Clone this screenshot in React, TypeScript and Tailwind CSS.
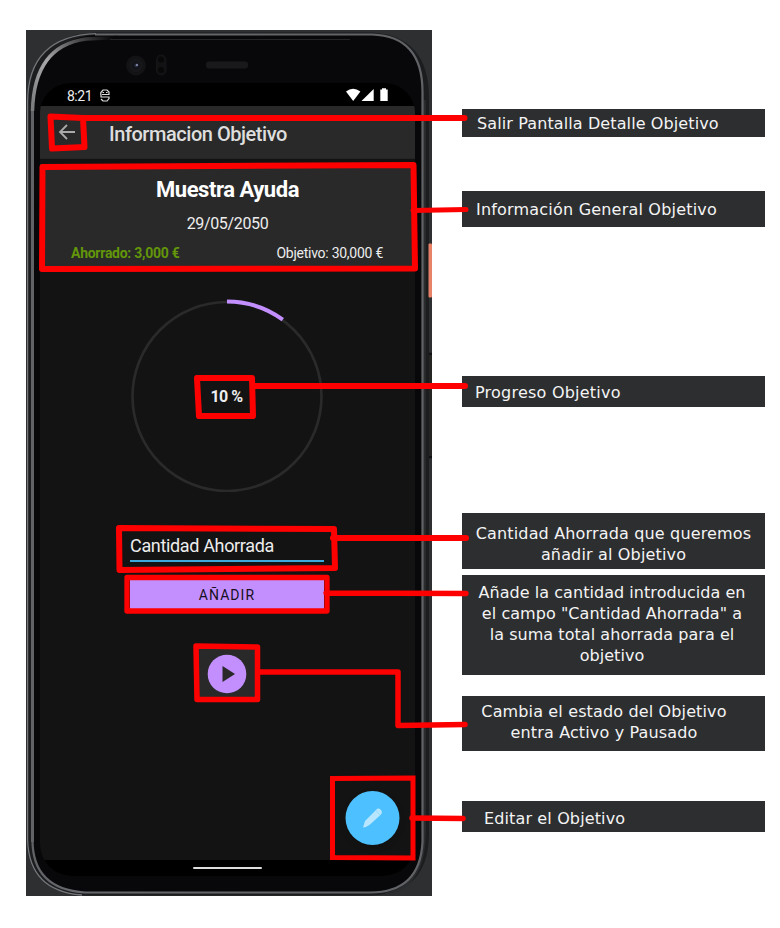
import React from "react";

type CalloutProps = { lines: string[]; box: string; text?: string };

function Callout({ lines, box, text = "" }: CalloutProps) {
  return (
    <div className={`w-[303px] bg-[#2d2e30] text-[#f4f4f4] ${box}`}>
      <p className={`whitespace-nowrap text-[16px] leading-[21px] ${text}`}>
        {lines.map((line) => (
          <span key={line} className="block">{line}</span>
        ))}
      </p>
    </div>
  );
}

function DeviceShell() {
  return (
    <svg className="absolute left-0 top-0" width="406" height="866" viewBox="26 30 406 866" fill="none">
      <defs>
        <linearGradient id="rim" x1="27" y1="0" x2="424" y2="0" gradientUnits="userSpaceOnUse">
          <stop offset="0" stopColor="#606265" />
          <stop offset=".12" stopColor="#66686b" />
          <stop offset="1" stopColor="#606265" />
        </linearGradient>
        <linearGradient id="corner" x1="30" y1="130" x2="115" y2="40" gradientUnits="userSpaceOnUse">
          <stop offset="0" stopColor="#6a6b6e" />
          <stop offset=".5" stopColor="#a8a8aa" />
          <stop offset="1" stopColor="#08080a" />
        </linearGradient>
        <radialGradient id="lens">
          <stop offset="0" stopColor="#3b4050" />
          <stop offset=".35" stopColor="#11131a" />
          <stop offset="1" stopColor="#19191b" />
        </radialGradient>
      </defs>
      <path d="M26 30H432V896H26Z" fill="#2d2f31" />
      <path d="M95 32.500H372Q429 36 429 98V835Q428 894 370 895.500H85Q27 891 27 840V102Q29 36 95 32.500Z" fill="#1c1d1f" />
      <path d="M95 35H372Q422.500 36 422.500 92V842Q420 892.500 370 892.500H85Q33 889 33 840V105Q36 40 95 35Z" fill="#08080a" />
      <path d="M424.500 100V835Q423 888 385 894" stroke="#2b2c2e" strokeWidth="2.500" />
      <path d="M95 34.500H372Q422.500 36 422.500 92V842Q420 892.500 370 892.500H85Q32.500 889 32.500 840" stroke="url(#rim)" strokeWidth="2.200" />
      <path d="M32.500 842V110" stroke="#606265" strokeWidth="3" />
      <path d="M32.500 111Q34 46 86 39L118 37.500" stroke="url(#corner)" strokeWidth="3.500" />
      <path d="M96 33.700Q28 36 27.600 102V840Q29 891 82 895" stroke="#74767a" strokeWidth="1.300" />
      <path d="M110 39.500H350" stroke="#252528" />
      <circle cx="136" cy="65.500" r="10" fill="#131315" />
      <circle cx="136" cy="65.500" r="6.500" fill="url(#lens)" />
      <circle cx="137" cy="65" r="1.200" fill="#7980a3" />
      <rect x="156.500" y="55" width="9.500" height="20" rx="4.700" fill="#121214" stroke="#151517" />
      <circle cx="161" cy="59.500" r="3" fill="#080809" />
      <circle cx="161" cy="70" r="3" fill="#080809" />
      <rect x="206" y="61.500" width="42" height="7" rx="3" fill="#19191b" />
      <rect x="428.500" y="243.500" width="3.500" height="54" rx="1" fill="#e78268" />
      <path d="M429 354H432M429 457H432" stroke="#111" strokeWidth="2.500" />
      <path d="M430.500 355V456" stroke="#252523" strokeWidth="3" />
    </svg>
  );
}

function StatusIcons() {
  return (
    <svg width="43" height="14" viewBox="346 88 43 14" fill="#fff">
      <path d="M346 91.500Q353 86 360.400 91.500L353.200 101Z" />
      <path d="M361.500 101L373.700 89V101Z" />
      <path d="M382 88.300H386V89.500H387.700V101H380.300V89.500H382Z" />
    </svg>
  );
}

function Screen() {
  return (
    <div className="relative flex h-[793px] w-[375px] flex-col overflow-hidden rounded-t-[30px] rounded-b-[32px] bg-[#131313] font-[Roboto,sans-serif] text-[#ededed]">
      <div className="flex h-[23px] shrink-0 items-center bg-black pl-[27px] pr-[26px]">
        <span className="pt-[3px] text-[14px] leading-[20px] tracking-[-0.5px]">8:21</span>
        <svg className="ml-[8px] mt-[2px]" width="10" height="13" viewBox="0 0 10 13" fill="none" stroke="#ddd" strokeWidth="1.2">
          <path d="M.8 6V3.500L3 1H7L9 3V6M2.500 3.500H4M6 3.500H7.500M2 5.500H9M1 5.500V8H9V9.500L7 12H3L1 10" />
        </svg>
        <span className="ml-auto flex"><StatusIcons /></span>
      </div>
      <header className="flex h-[53px] shrink-0 items-center border-b border-[#242424] bg-[#292929] pl-[18px]">
        <svg width="17" height="16" viewBox="0 0 17 16" fill="none" stroke="#aaa" strokeWidth="1.8">
          <path d="M17 8H2M9 1L2 8L9 15" />
        </svg>
        <h1 className="ml-[34px] pt-[3px] text-[20px] font-medium leading-[24px] tracking-[-0.46px] text-[#dedede]">Informacion Objetivo</h1>
      </header>
      <section className="mt-[5px] flex h-[106px] shrink-0 flex-col bg-[#292929]">
        <h2 className="mt-[13px] text-center text-[22px] font-bold leading-[26px] tracking-[-0.46px] text-white">Muestra Ayuda</h2>
        <p className="mt-[11px] text-center text-[16px] leading-[20px] tracking-[-0.35px]">29/05/2050</p>
        <div className="mt-[10px] flex justify-between pl-[31px] pr-[32px] text-[14px] leading-[18px] tracking-[-0.26px]">
          <span className="font-bold text-[#63960a]">Ahorrado: 3,000 €</span>
          <span>Objetivo: 30,000 €</span>
        </div>
      </section>
      <section className="mt-[28px] flex h-[194px] shrink-0 justify-center pr-[2px]">
        <div className="grid h-[194px] w-[194px] place-items-center">
          <svg className="col-start-1 row-start-1" width="194" height="194" fill="none">
            <circle cx="97" cy="98.500" r="94.500" stroke="#2a2a2a" strokeWidth="2.700" />
            <path d="M97 3.500A95 95 0 0 1 152.800 21.600" stroke="#c38fff" strokeWidth="4" />
          </svg>
          <strong className="col-start-1 row-start-1 pt-[4px] text-[16px] font-bold leading-[20px] tracking-[-0.5px] text-[#eee]">10 %</strong>
        </div>
      </section>
      <div className="mt-[40px] flex shrink-0 flex-col items-center pr-[1px]">
        <div className="h-[30px] w-[194px] border-b-2 border-[#3da8dc] text-[18px] leading-[27px] tracking-[-0.34px]">Cantidad Ahorrada</div>
        <button className="mt-[17px] h-[31px] w-[194px] bg-[#c38fff] text-[14px] leading-[32px] tracking-[1.05px] text-[#171020]">AÑADIR</button>
        <div className="mt-[36px] flex h-[56px] w-[60px] items-center justify-center bg-[#292929]">
          <svg width="40" height="40"><circle cx="20" cy="20" r="19.300" fill="#c38fff" /><path d="M15.500 12L28 20L15.500 28Z" fill="#292929" /></svg>
        </div>
      </div>
      <div className="mb-[15px] mt-auto flex shrink-0 justify-end pr-[15px]">
        <svg className="drop-shadow-md" width="55" height="55" viewBox="345 790 55 55">
          <circle cx="372.500" cy="818" r="27" fill="#4dc1ff" />
          <path d="M363 827.500L365 821L376 810Q378 807.500 380.500 809.500Q383 812 381 814.500L370 824.500Q367 827 363 827.500Z" fill="#b8e6ff" />
          <path d="M375.500 810L380 815" stroke="#8dd5fc" strokeWidth=".7" />
        </svg>
      </div>
      <div className="flex h-[16px] shrink-0 items-center justify-center bg-black"><div className="h-[2px] w-[69px] rounded-full bg-[#dedede]" /></div>
    </div>
  );
}

function Pointers() {
  return (
    <svg className="pointer-events-none absolute left-0 top-0" width="780" height="928" fill="none" stroke="#f00" strokeWidth="6" strokeLinejoin="round" strokeLinecap="round">
      <path d="M50.500 116.500L83 118L84.500 147L52 148.500Z M83 118H464.500" />
      <path d="M42.500 167L413.500 165L415 268.500L42 269Z" />
      <path d="M413 210.500L466 209.500" strokeWidth="5" />
      <path d="M197 378H252L253 416H199Z M253 386H465" />
      <path d="M119 528L334 529L335 568L119.500 570Z" />
      <path d="M333 538H466" />
      <path d="M127 577.500H327V611H127Z M326 593L466 593.500" strokeWidth="5.300" />
      <path d="M196 646L257.500 647V699.500H197Z M258 672H398V725.500L465 724.500" strokeWidth="5.500" />
      <path d="M332.500 778.500L413 778V858L332.500 857.500Z" strokeWidth="5" strokeLinejoin="miter" />
      <path d="M412 818L463 818.500" strokeWidth="5.500" />
    </svg>
  );
}

export default function App() {
  return (
    <main className="relative flex h-[928px] w-[780px] overflow-hidden bg-white pl-[26px]">
      <div className="relative mt-[30px] h-[866px] w-[406px] shrink-0 pl-[14px] pt-[53px]">
        <DeviceShell />
        <Screen />
      </div>
      <aside className="ml-[30px] flex w-[303px] flex-col pt-[109px] font-['DejaVu_Sans',Verdana,sans-serif]">
        <Callout lines={["Salir Pantalla Detalle Objetivo"]} box="h-[28px] pl-[15px] pt-[4px]" text="tracking-[0.11px]" />
        <Callout lines={["Información General Objetivo"]} box="mt-[54px] h-[36px] pl-[14px] pt-[8px]" text="tracking-[0.2px]" />
        <Callout lines={["Progreso Objetivo"]} box="mt-[149px] h-[31px] pl-[13px] pt-[6px]" text="tracking-[0.23px]" />
        <Callout lines={["Cantidad Ahorrada que queremos", "añadir al Objetivo"]} box="mt-[106px] h-[56px] pt-[10px]" text="text-center tracking-[0.16px]" />
        <Callout lines={["Añade la cantidad introducida en", "el campo \"Cantidad Ahorrada\" a", "la suma total ahorrada para el", "objetivo"]} box="mt-[6px] h-[100px] pt-[7px] pr-[3px]" text="text-center tracking-[0.05px]" />
        <Callout lines={["Cambia el estado del Objetivo", "entra Activo y Pausado"]} box="mt-[21px] h-[55px] pt-[5px] pr-[19px]" text="text-center tracking-[0.14px]" />
        <Callout lines={["Editar el Objetivo"]} box="mt-[50px] h-[31px] pl-[22px] pt-[7px]" text="tracking-[0.13px]" />
      </aside>
      <Pointers />
    </main>
  );
}
